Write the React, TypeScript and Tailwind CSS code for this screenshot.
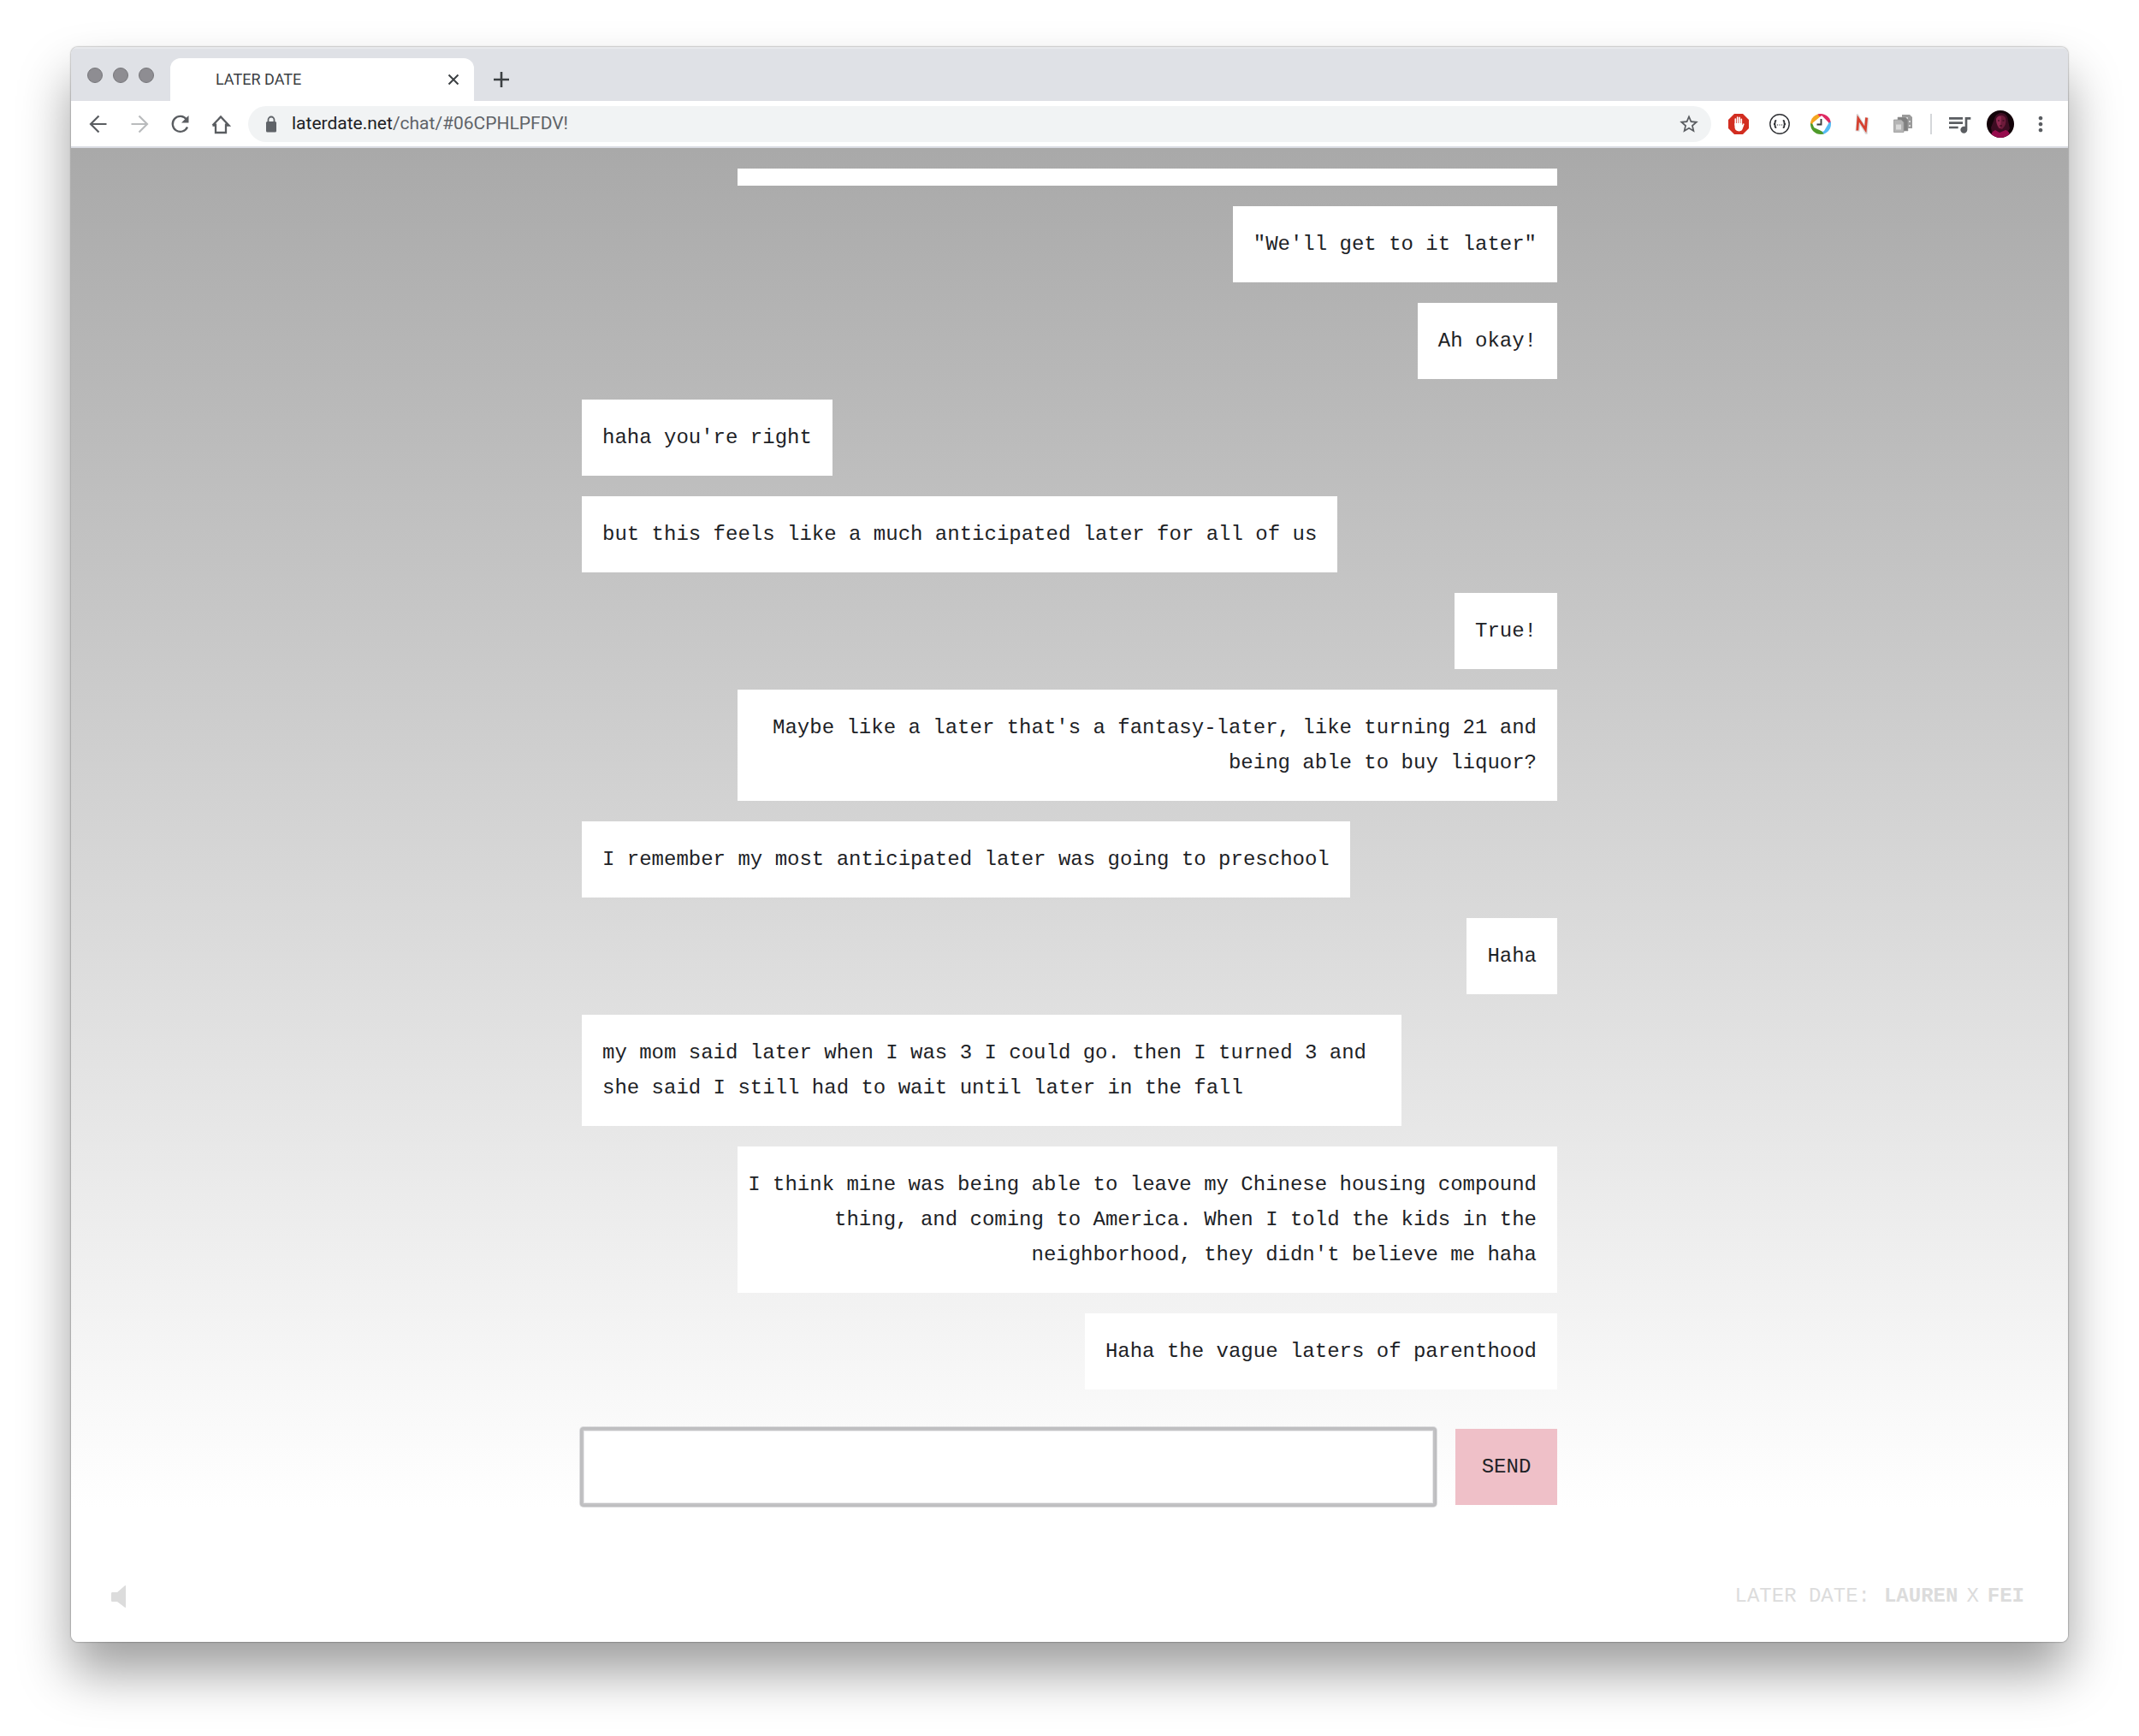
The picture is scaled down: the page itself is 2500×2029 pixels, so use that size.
import { useState } from 'react';
import type { FormEvent, ReactNode } from 'react';
import { MdMoreVert, MdQueueMusic, MdStarBorder } from 'react-icons/md';

interface Message {
    text: string;
    mine: boolean;
}

const MESSAGES: Message[] = [
    { text: '"We\'ll get to it later"', mine: true },
    { text: 'Ah okay!', mine: true },
    { text: "haha you're right", mine: false },
    { text: 'but this feels like a much anticipated later for all of us', mine: false },
    { text: 'True!', mine: true },
    { text: "Maybe like a later that's a fantasy-later, like turning 21 and being able to buy liquor?", mine: true },
    { text: 'I remember my most anticipated later was going to preschool', mine: false },
    { text: 'Haha', mine: true },
    { text: 'my mom said later when I was 3 I could go. then I turned 3 and she said I still had to wait until later in the fall', mine: false },
    { text: "I think mine was being able to leave my Chinese housing compound thing, and coming to America. When I told the kids in the neighborhood, they didn't believe me haha", mine: true },
    { text: 'Haha the vague laters of parenthood', mine: true },
];

// anything longer than this wraps and fills the bubble
const LINE_LENGTH = 62;

function IconButton({ label, className = '', children }: { label: string; className?: string; children: ReactNode }) {
    return (
        <button type="button" aria-label={label} className={`flex shrink-0 items-center justify-center ${className}`}>
            {children}
        </button>
    );
}

function Extensions() {
    return (
        <div className="flex shrink-0 items-center gap-4">
            <IconButton label="AdBlock" className="size-8">
                <svg viewBox="0 0 24 24" className="size-6">
                    <path d="M7 0h10l7 7v10l-7 7H7l-7-7V7z" fill="#d22d20" />
                    <path d="M8.300 13V6M10.700 11V4.200M13.100 11V4.400M15.300 12V6.400" stroke="#fff" strokeWidth="1.700" strokeLinecap="round" />
                    <path d="M7.450 11h8.700v2.500l.8-1.600c.6-1 1.900-.6 1.600.5L17 16.800c-.7 2.300-1.700 3.600-4.200 3.600-3.600 0-5.350-2-5.350-5.400z" fill="#fff" />
                </svg>
            </IconButton>
            <IconButton label="JSON viewer" className="size-8">
                <svg viewBox="0 0 24 24" className="size-6" fill="none" stroke="#303236">
                    <circle cx="12" cy="12" r="11.200" strokeWidth="1.400" />
                    <path d="M8.200 8c-1.700 0-1.500.6-1.500 2s-.4 2-1.700 2c1.300 0 1.700.6 1.700 2s-.2 2 1.500 2M15.800 8c1.700 0 1.500.6 1.500 2s.4 2 1.700 2c-1.300 0-1.700.6-1.700 2s.2 2-1.500 2" strokeWidth="1.800" />
                    <path d="M8.900 13h1.200M11.400 13h1.200M13.900 13h1.200" strokeWidth="1.200" />
                </svg>
            </IconButton>
            <IconButton label="Timer" className="size-8">
                <svg viewBox="0 0 24 24" className="size-6">
                    <clipPath id="timer">
                        <circle cx="12" cy="12" r="12" />
                    </clipPath>
                    <g clipPath="url(#timer)">
                        <path d="M0 0h13L7 12H0z" fill="#f5a61f" />
                        <path d="M8 0h16v12l-8-3z" fill="#df2a63" />
                        <path d="M24 9v15H12l3-9z" fill="#55bbf4" />
                        <path d="M0 11l9 4 7 9H0z" fill="#4f9a2a" />
                    </g>
                    <path d="M12.500 2.500q1-.4 1.700.4l6.600 6.800q.7.900.2 1.900L16 20q-.6 1-1.800.8L5 16.600q-.9-.5-1.200-1.400L2.600 12q-.2-1 .5-1.700z" fill="#fff" />
                    <path d="M12.500 6V12.500H7.500" fill="none" stroke="#3b3b3b" strokeWidth="1.900" />
                </svg>
            </IconButton>
            <IconButton label="News" className="size-8">
                <svg viewBox="0 0 24 24" className="size-6" fill="none">
                    <path d="M7 20.500L8 5.500 16.500 19.500 18 4.500" stroke="#dcdcdc" strokeWidth="5" />
                    <path d="M6.800 19.500L7.800 5.500 16.300 18.500 17.600 4.500" stroke="#d6402f" strokeWidth="2.800" />
                </svg>
            </IconButton>
            <IconButton label="Pages" className="size-8">
                <svg viewBox="0 0 24 24" className="size-6">
                    <path d="M11 1h9l3 3v13H11z" fill="#9a9a9a" />
                    <path d="M19 8h2v2h-2zM19 13h2v2h-2zM16 4h2v2h-2z" fill="#d5d5d5" />
                    <path d="M6 4h9l3 3v13H6z" fill="#808080" stroke="#a5a5a5" strokeWidth=".6" />
                    <path d="M1.500 7h8.500l3 3v11.500H1.500z" fill="#b5b5b5" stroke="#989898" strokeWidth=".8" />
                    <path d="M4 12.500h6v6H4z" fill="#dadada" />
                </svg>
            </IconButton>
        </div>
    );
}

function BrowserChrome() {
    return (
        <header className="font-[Roboto,sans-serif]">
            <div className="flex h-[63px] items-end border-t-2 border-[#e8e9ec] bg-[#dfe1e6]">
                <div className="flex h-full w-[116px] items-center gap-3 pl-[19px]">
                    <span className="size-[18px] rounded-full border border-[#77777b] bg-[#8e8d92]" />
                    <span className="size-[18px] rounded-full border border-[#77777b] bg-[#8e8d92]" />
                    <span className="size-[18px] rounded-full border border-[#77777b] bg-[#8e8d92]" />
                </div>
                <div className="flex h-[50px] w-[355px] items-center justify-between rounded-t-xl bg-white pl-[53px] pr-4">
                    <span className="text-lg text-[#3c4043]">LATER DATE</span>
                    <IconButton label="Close tab" className="size-4">
                        <svg viewBox="0 0 16 16" className="size-4" stroke="#3c4043" strokeWidth="2">
                            <path d="M2.500 2.500l11 11M13.500 2.500l-11 11" />
                        </svg>
                    </IconButton>
                </div>
                <IconButton label="New tab" className="ml-5 h-[50px] w-6">
                    <svg viewBox="0 0 24 24" className="size-6" stroke="#3c4043" strokeWidth="2.600">
                        <path d="M12 3v18M3 12h18" />
                    </svg>
                </IconButton>
            </div>

            <div className="flex h-[55px] items-center border-b-2 border-[#dadce3] bg-white px-4">
                <div className="flex w-[191px] shrink-0 items-center gap-4">
                    <IconButton label="Back" className="size-8">
                        <svg viewBox="0 0 24 24" className="size-6" fill="none" stroke="#5a5d61" strokeWidth="2.200">
                            <path d="M21.500 12H3.500M12.500 2.500L3 12l9.500 9.500" />
                        </svg>
                    </IconButton>
                    <IconButton label="Forward" className="size-8">
                        <svg viewBox="0 0 24 24" className="size-6" fill="none" stroke="#b9bbbd" strokeWidth="2.200">
                            <path d="M2.500 12h18M11.500 2.500L21 12l-9.500 9.500" />
                        </svg>
                    </IconButton>
                    <IconButton label="Reload" className="size-8">
                        <svg viewBox="0 0 24 24" className="size-6" fill="none">
                            <path d="M19 6.500A9 9 0 1 0 20 15.500" stroke="#5a5d61" strokeWidth="2.300" />
                            <path d="M21.500 2v8.500H13z" fill="#5a5d61" />
                        </svg>
                    </IconButton>
                    <IconButton label="Home" className="size-8">
                        <svg viewBox="0 0 24 24" className="size-6" fill="none" stroke="#5a5d61" strokeWidth="2.300">
                            <path d="M5 11.500V22h12V11.500M1.500 13.500L11 3.500l9.500 10H17M1.500 13.500H5" />
                        </svg>
                    </IconButton>
                </div>

                <div className="flex h-[42px] flex-1 items-center rounded-full bg-[#f1f3f4] pl-[19px] pr-3">
                    <svg viewBox="0 0 16 20" className="h-5 w-4" aria-hidden="true">
                        <path d="M4.500 9V5a3.500 3.500 0 0 1 7 0v4" fill="none" stroke="#5f6368" strokeWidth="1.800" />
                        <rect x="2" y="7" width="12" height="12.500" rx="1.500" fill="#5f6368" />
                    </svg>
                    <a href="#06CPHLPFDV!" className="ml-4 text-[21px] text-[#5f6368]">
                        <span className="text-[#202124]">laterdate.net</span>/chat/#06CPHLPFDV!
                    </a>
                    <IconButton label="Bookmark" className="ml-auto size-7">
                        <MdStarBorder className="size-[26px] text-[#5a5d61]" />
                    </IconButton>
                </div>

                <div className="ml-4 flex items-center gap-4">
                    <Extensions />
                    <span className="h-6 w-[2px] bg-[#d5d7da]" />
                    <IconButton label="Media" className="size-8">
                        <MdQueueMusic className="size-8 text-[#5a5d61]" />
                    </IconButton>
                    <IconButton label="Profile" className="size-8">
                        <svg viewBox="0 0 32 32" className="size-8">
                            <clipPath id="avatar">
                                <circle cx="16" cy="16" r="16" />
                            </clipPath>
                            <g clipPath="url(#avatar)">
                                <path d="M0 0h32v32H0z" fill="#130309" />
                                <path d="M9 10c1-5 5-7 8-7 5 0 8 4 8 9l2 9-3 5H6l-1-6z" fill="#3d0c22" />
                                <path d="M11 10c2-5 8-6 11-1 1 5 0 9-4 13l-4-1c-2-3-3-7-3-11z" fill="#6d1a3a" />
                                <path d="M11 10c2-4 5-4 6-2l-1 13c-3-2-5-6-5-11z" fill="#8f2850" />
                                <path d="M4 32c1-5 3-8 6-9l5 3 7-3c4 1 5 4 6 9z" fill="#960c4d" />
                                <path d="M13 12h2M18.500 12h2M15 18h3" stroke="#2a0615" />
                            </g>
                        </svg>
                    </IconButton>
                    <IconButton label="Menu" className="-ml-px size-8">
                        <MdMoreVert className="size-7 text-[#5a5d61]" />
                    </IconButton>
                </div>
            </div>
        </header>
    );
}

function Bubble({ text, mine }: Message) {
    const isLong = text.length > LINE_LENGTH;
    const side = mine ? 'self-end text-right' : 'self-start';
    const padding = !isLong ? 'px-6' : mine ? 'pl-3 pr-6' : 'pl-6 pr-3';

    return <li className={`max-w-[958px] bg-white py-6 ${side} ${padding}`}>{text}</li>;
}

export default function App() {
    const [draft, setDraft] = useState('');
    const [messages, setMessages] = useState(MESSAGES);

    const handleSend = (e: FormEvent) => {
        e.preventDefault();
        if (!draft.trim()) return;
        setMessages([...messages, { text: draft, mine: true }]);
        setDraft('');
    };

    return (
        <div className="min-h-screen bg-white px-[83px] pb-[109px] pt-[55px]">
            <div className="overflow-hidden rounded-lg shadow-[0_0_2px_rgba(0,0,0,0.6),0_36px_60px_rgba(0,0,0,0.38)]">
                <BrowserChrome />

                <main className="bg-[linear-gradient(#a9a9a9,#fff_91%)] font-['Liberation_Mono',monospace] text-2xl leading-[41px] text-[#1d2226]">
                    <div className="mx-auto w-full max-w-[1140px] pt-6">
                        <ul className="flex flex-col gap-6">
                            {/* tail of the message scrolled past the top */}
                            <li className="h-5 w-full max-w-[958px] self-end bg-white" />
                            {messages.map((m, i) => (
                                <Bubble key={i} {...m} />
                            ))}
                        </ul>

                        <form onSubmit={handleSend} className="mt-[46px] flex gap-6">
                            <input
                                type="text"
                                aria-label="Message"
                                value={draft}
                                onChange={(e) => setDraft(e.target.value)}
                                className="h-[89px] min-w-0 flex-1 rounded-[2px] border-2 border-[#c2c2c4] bg-white px-6 shadow-[0_0_0_2px_#bebec0,0_0_0_3px_#dedee0,inset_0_0_0_1px_#e8e8ea] outline-none"
                            />
                            <button type="submit" className="h-[89px] w-[119px] bg-[#efc0c8]">
                                SEND
                            </button>
                        </form>
                    </div>

                    <footer className="mt-[86px] flex items-center justify-between pb-[33px] pl-[46px] pr-[51px] text-[#dcdcdc]">
                        <IconButton label="Toggle sound" className="h-7 w-5">
                            <svg viewBox="0 0 20 28" className="h-7 w-5" fill="currentColor">
                                <path d="M1 10.500C1 9.500 1.500 9 2.500 9H8L17 1.200Q18 .5 18 2v24q0 1.500-1 .8L8 20H2.500C1.500 20 1 19.500 1 18.500z" />
                            </svg>
                        </IconButton>
                        <p className="flex gap-4">
                            <span>LATER DATE:</span>
                            <span className="flex gap-[10px]">
                                <strong>LAUREN</strong>
                                <span>X</span>
                                <strong>FEI</strong>
                            </span>
                        </p>
                    </footer>
                </main>
            </div>
        </div>
    );
}
